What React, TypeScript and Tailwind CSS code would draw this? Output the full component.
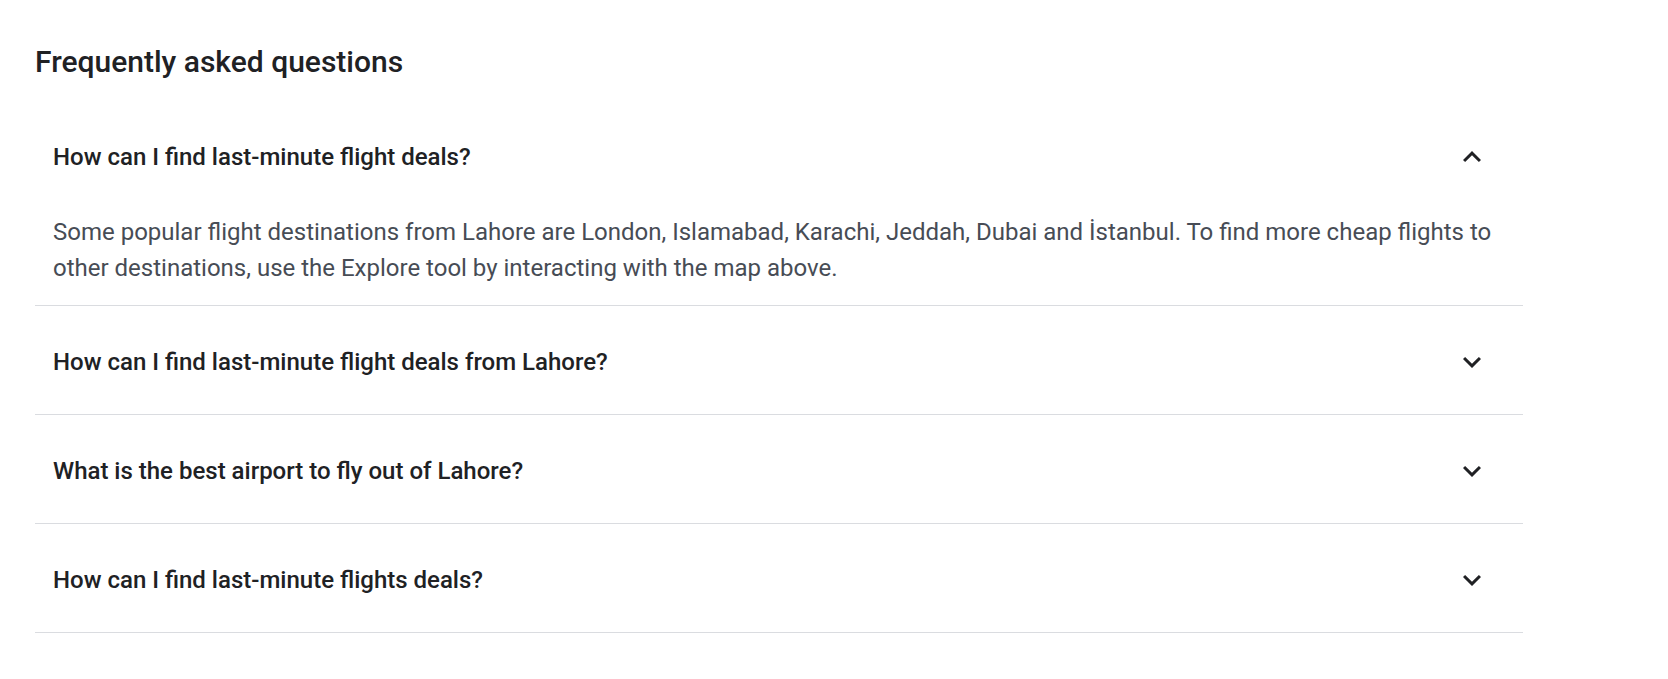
import React, { useState } from "react";

type Faq = {
  q: string;
  a?: string;
};

const faqs: Faq[] = [
  {
    q: "How can I find last-minute flight deals?",
    a: "Some popular flight destinations from Lahore are London, Islamabad, Karachi, Jeddah, Dubai and İstanbul. To find more cheap flights to other destinations, use the Explore tool by interacting with the map above.",
  },
  { q: "How can I find last-minute flight deals from Lahore?" },
  { q: "What is the best airport to fly out of Lahore?" },
  { q: "How can I find last-minute flights deals?" },
];

const Chevron = ({ up }: { up: boolean }) => (
  <svg viewBox="0 0 24 24" className="h-[36px] w-[36px] shrink-0 fill-[#202124]">
    {up ? (
      <path d="M12 8l-6 6 1.41 1.41L12 10.83l4.59 4.58L18 14z" />
    ) : (
      <path d="M16.59 8.59L12 13.17 7.41 8.59 6 10l6 6 6-6z" />
    )}
  </svg>
);

export default function App() {
  const [open, setOpen] = useState<number | null>(0);

  return (
    <div className="min-h-screen bg-white pl-[35px] pt-[44px] font-['Roboto',sans-serif]">
      <div className="w-[1488px]">
        <h2 className="mb-[21px] text-[30px] font-medium leading-[36px] text-[#202124]">
          Frequently asked questions
        </h2>

        {faqs.map((item, i) => {
          const isOpen = open === i;
          return (
            <div key={i} className="border-b border-[#dadce0]">
              <button
                type="button"
                onClick={() => setOpen(isOpen ? null : i)}
                className="flex h-[108px] w-full items-center justify-between pl-[18px] pr-[33px] pt-[4px] text-left"
              >
                <span className="text-[24px] font-medium leading-[32px] text-[#202124]">
                  {item.q}
                </span>
                <Chevron up={isOpen} />
              </button>
              {isOpen && item.a && (
                <div className="pb-[19px] pl-[18px] pr-[18px] pt-[5px] text-[24px] leading-[36px] text-[#474c55]">
                  {item.a}
                </div>
              )}
            </div>
          );
        })}
      </div>
    </div>
  );
}
